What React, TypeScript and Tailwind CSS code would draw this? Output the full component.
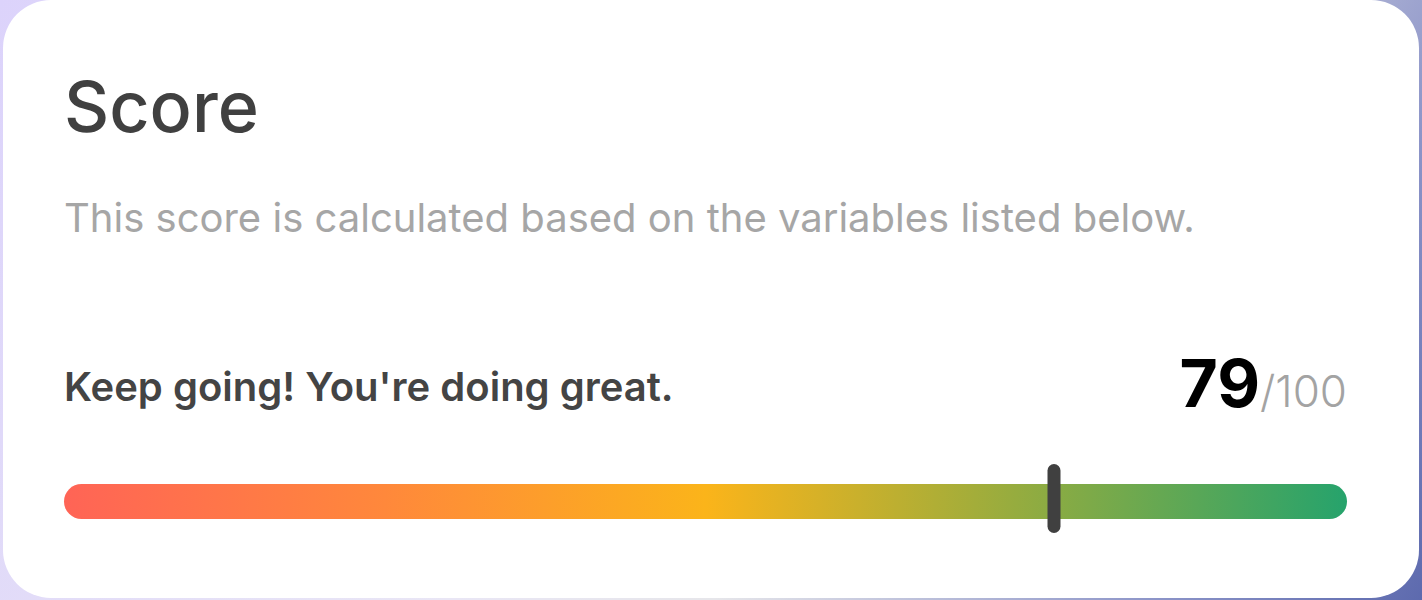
export default function App() {
  const score = 79;

  return (
    <div className="h-[600px] w-full overflow-hidden bg-[linear-gradient(120deg,#dcd3fb_0%,#e9e6f5_45%,#e6e6ea_60%,#8c94c8_85%,#5d6aae_100%)] px-[3px] font-['Inter',sans-serif]">
      <div className="flex h-[598px] flex-col rounded-[48px] bg-white pl-[61px] pr-[72px] pt-[67px]">
        <h1 className="text-[70px] font-medium leading-[80px] text-[#404040]">Score</h1>

        <p className="mt-[47px] text-[40px] leading-[48px] text-[#a6a6a6]">
          This score is calculated based on the variables listed below.
        </p>

        <div className="mt-[108px] flex items-end justify-between">
          <div className="pb-[13px] text-[40px] font-semibold leading-[48px] text-[#444444]">
            Keep going! You're doing great.
          </div>
          <div className="flex items-baseline leading-[66px]">
            <span className="text-[66px] font-bold text-black">{score}</span>
            <span className="text-[44px] font-light text-[#a3a3a3]">/100</span>
          </div>
        </div>

        {/* bar */}
        <div className="relative mt-[60px] h-[35px] rounded-full bg-[linear-gradient(90deg,#ff6456_0%,#ff883b_25%,#fbb41a_50%,#8aab43_77%,#26a36c_100%)]">
          <div
            className="absolute top-[-20px] h-[69px] w-[13px] -translate-x-1/2 rounded-full bg-[#404040]"
            style={{ left: "77.2%" }}
          />
        </div>
      </div>
    </div>
  );
}
